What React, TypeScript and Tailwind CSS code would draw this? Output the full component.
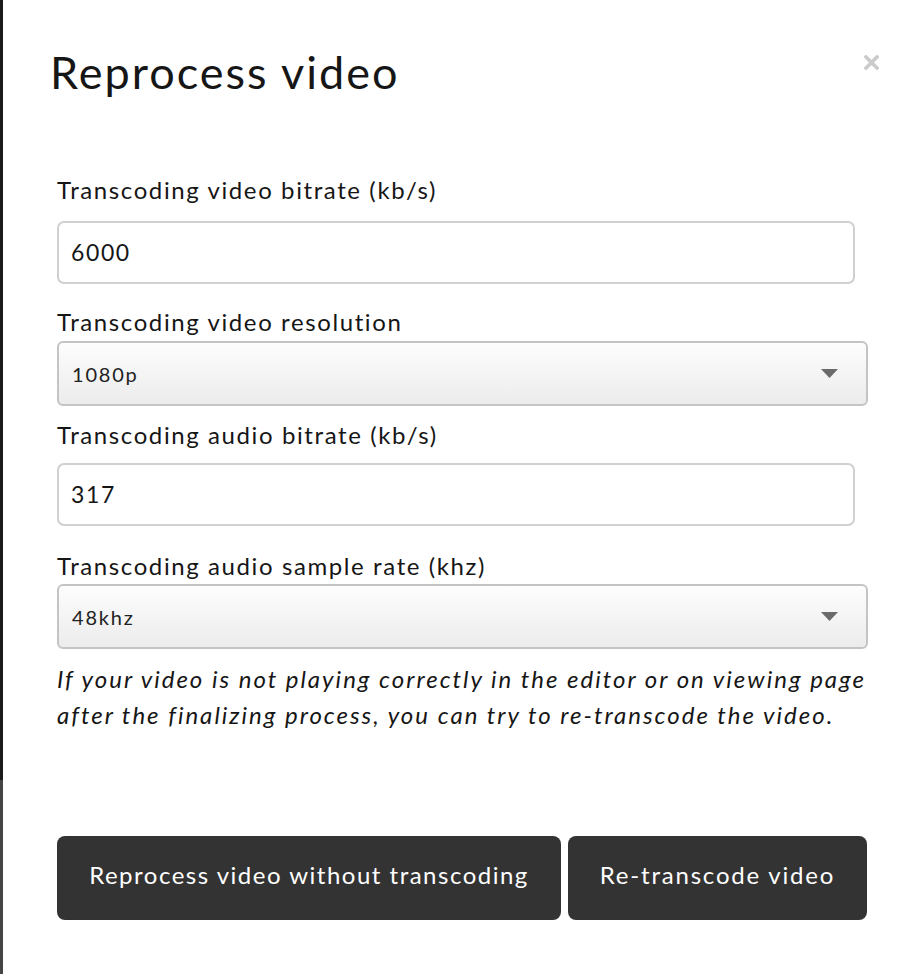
import React from 'react';

const font = { fontFamily: 'Lato, "Noto Sans", sans-serif' };

// Text input with a label above it
const Field = ({ label, value, labelGap, inputGap }: { label: string; value: string; labelGap: string; inputGap: string }) => (
  <div className={labelGap}>
    <div className="text-[24px] leading-[30px] tracking-[1.6px] text-[#161616]">{label}</div>
    <div className={`${inputGap} w-[798px] h-[63px] border-2 border-[#d0d0d0] rounded-[7px] flex items-center px-[12px] text-[23px] tracking-[1.6px] text-[#161616]`}>
      {value}
    </div>
  </div>
);

// Select lookalike with the small grey triangle
const SelectField = ({ label, value, labelGap, inputGap }: { label: string; value: string; labelGap: string; inputGap: string }) => (
  <div className={labelGap}>
    <div className="text-[24px] leading-[30px] tracking-[1.6px] text-[#161616]">{label}</div>
    <div className={`${inputGap} w-[811px] h-[65px] border-2 border-[#c4c4c4] rounded-[6px] bg-gradient-to-b from-[#fdfdfd] to-[#ececec] flex items-center justify-between pl-[13px] pr-[28px] text-[20px] tracking-[1.8px] text-[#222]`}>
      <span>{value}</span>
      <svg width="17" height="9" viewBox="0 0 17 9">
        <polygon points="0,0 17,0 8.5,9" fill="#6b6b6b" />
      </svg>
    </div>
  </div>
);

export default function App() {
  return (
    <div className="w-[920px] h-[974px] flex bg-white overflow-hidden" style={font}>
      <div className="w-[3px] flex flex-col">
        <div className="h-[780px] bg-[#1b1b1b]" />
        <div className="flex-1 bg-[#454545]" />
      </div>
      <div className="flex-1 relative">
        <button className="absolute left-[861px] top-[55px]">
          <svg width="15" height="15" viewBox="0 0 15 15">
            <path d="M2 2 L13 13 M13 2 L2 13" stroke="#cbcbcb" strokeWidth="3.6" strokeLinecap="square" />
          </svg>
        </button>
        <h1 className="ml-[47px] mt-[44px] text-[45px] leading-[56px] tracking-[2px] text-[#161616]">Reprocess video</h1>
        <div className="ml-[54px]">
          <Field label="Transcoding video bitrate (kb/s)" value="6000" labelGap="mt-[75px]" inputGap="mt-[16px]" />
          <SelectField label="Transcoding video resolution" value="1080p" labelGap="mt-[23px]" inputGap="mt-[4px]" />
          <Field label="Transcoding audio bitrate (kb/s)" value="317" labelGap="mt-[14px]" inputGap="mt-[13px]" />
          <SelectField label="Transcoding audio sample rate (khz)" value="48khz" labelGap="mt-[25px]" inputGap="mt-[3px]" />
          <p className="mt-[12px] italic text-[24px] leading-[36px] tracking-[2px] text-[#161616] whitespace-nowrap">
            If your video is not playing correctly in the editor or on viewing page
            <br />
            after the finalizing process, you can try to re-transcode the video.
          </p>
          <div className="mt-[103px] flex gap-[7px]">
            <button className="w-[504px] h-[84px] pb-[6px] rounded-[8px] bg-[#333333] text-white text-[24px] tracking-[1.5px]">
              Reprocess video without transcoding
            </button>
            <button className="w-[299px] h-[84px] pb-[6px] rounded-[8px] bg-[#333333] text-white text-[24px] tracking-[1.8px]">
              Re-transcode video
            </button>
          </div>
        </div>
      </div>
    </div>
  );
}
